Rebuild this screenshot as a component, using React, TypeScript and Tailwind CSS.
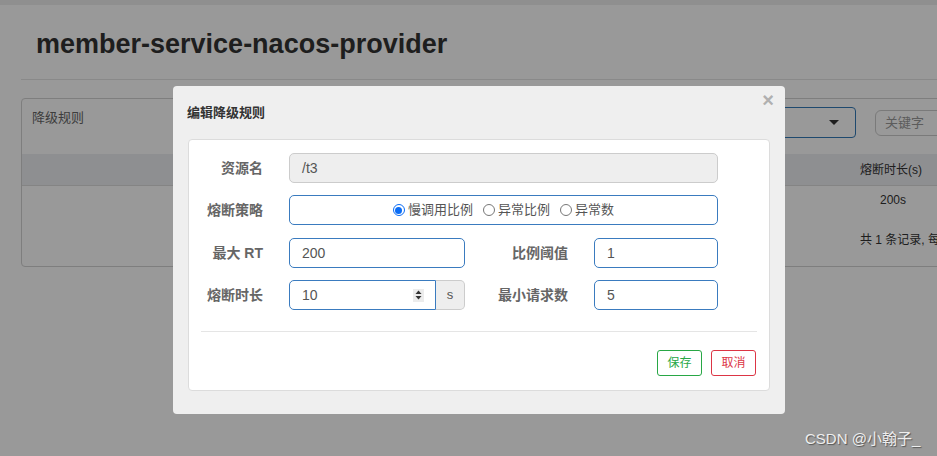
import React from "react";

const font = { fontFamily: '"Liberation Sans", "Noto Sans CJK SC", sans-serif' };

const Label = ({ text, className }: { text: string; className: string }) => (
  <div className={`shrink-0 text-right text-[14px] font-bold text-[#666] ${className}`}>{text}</div>
);

const Field = ({ value, className }: { value: string; className: string }) => (
  <div
    className={`flex h-[30px] items-center rounded-[5px] border border-[#3a7bbf] bg-white pl-[12px] text-[14px] text-[#555] ${className}`}
  >
    {value}
  </div>
);

const Radio = ({ label, checked }: { label: string; checked?: boolean }) => (
  <label className="flex items-center gap-[3px]">
    <span
      className={`flex h-[12px] w-[12px] items-center justify-center rounded-full border ${
        checked ? "border-[#0a6cf5]" : "border-[#777]"
      } bg-white`}
    >
      {checked && <span className="h-[7px] w-[7px] rounded-full bg-[#0a6cf5]" />}
    </span>
    <span>{label}</span>
  </label>
);

export default function App() {
  return (
    <div className="relative h-[456px] w-full overflow-hidden bg-white" style={font}>
      {/* page behind the dialog */}
      <div className="h-[5px] bg-[#eee]" />
      <div className="pl-[21px]">
        <div className="flex h-[75px] items-center border-b border-[#e4e4e4] pl-[15px] pt-[5px]">
          <h1 className="text-[27px] font-bold text-[#333]">member-service-nacos-provider</h1>
        </div>
        <div className="mt-[18px] w-[1000px] rounded-[4px] border border-[#d2d2d2]">
          <div className="flex h-[55px] items-start">
            <div className="pl-[10px] pt-[9px] text-[13px] text-[#666]">降级规则</div>
            <div className="ml-auto mr-[25px] mt-[8px] flex items-center gap-[19px]">
              <div className="flex h-[31px] w-[300px] items-center justify-end rounded-[4px] border border-[#337ab7] pr-[16px]">
                <span className="h-0 w-0 border-x-[5px] border-t-[5px] border-x-transparent border-t-[#333]" />
              </div>
              <div className="flex h-[26px] w-[120px] items-center rounded-[6px] border border-[#ccc] pl-[9px] text-[13px] text-[#999]">
                关键字
              </div>
            </div>
          </div>
          <div className="flex h-[32px] items-center border-b border-[#ddd] bg-[#edeef2] pl-[838px] text-[12px] text-[#333]">
            熔断时长(s)
          </div>
          <div className="flex h-[28px] items-center pl-[858px] text-[12px] text-[#333]">200s</div>
          <div className="flex h-[52px] items-center pl-[838px] text-[12px] text-[#333]">共 1 条记录, 每页</div>
        </div>
      </div>

      {/* backdrop */}
      <div className="absolute inset-0 bg-black/40" />

      {/* dialog */}
      <div className="absolute left-[173px] top-[86px] w-[612px] rounded-[4px] bg-[#efefef] pb-[23px]">
        <div className="relative flex h-[53px] items-center pl-[14px] text-[13px] font-bold text-[#333]">
          编辑降级规则
          <span className="absolute right-[11px] top-[2px] text-[20px] font-bold leading-[24px] text-[#b0b0b0]">×</span>
        </div>
        <div className="mx-[15px] rounded-[4px] border border-[#dcdcdc] bg-white pb-[14px] pt-[13px]">
          <div className="flex items-center">
            <Label text="资源名" className="w-[74px]" />
            <div className="ml-[26px] flex h-[30px] w-[429px] items-center rounded-[5px] border border-[#ccc] bg-[#eee] pl-[12px] text-[14px] text-[#555]">
              /t3
            </div>
          </div>
          <div className="mt-[12px] flex items-center">
            <Label text="熔断策略" className="w-[74px]" />
            <div className="ml-[26px] flex h-[30px] w-[429px] items-center justify-center gap-[10px] rounded-[5px] border border-[#3a7bbf] text-[13px] text-[#555]">
              <Radio label="慢调用比例" checked />
              <Radio label="异常比例" />
              <Radio label="异常数" />
            </div>
          </div>
          <div className="mt-[13px] flex items-center">
            <Label text="最大 RT" className="w-[74px]" />
            <Field value="200" className="ml-[26px] w-[176px]" />
            <Label text="比例阈值" className="w-[103px]" />
            <Field value="1" className="ml-[26px] w-[124px]" />
          </div>
          <div className="mt-[12px] flex items-center">
            <Label text="熔断时长" className="w-[74px]" />
            <div className="ml-[26px] flex h-[30px] w-[176px]">
              <div className="flex w-[147px] items-center justify-between rounded-l-[5px] border border-[#3a7bbf] pl-[12px] pr-[11px] text-[14px] text-[#555]">
                10
                <span className="flex h-[13px] w-[11px] items-center justify-center bg-[#ececec]">
                  <svg width="7" height="10" viewBox="0 0 7 10">
                    <path d="M3.5 0.5 L6.5 4 L0.5 4 Z" fill="#333" />
                    <path d="M3.5 9.5 L6.5 6 L0.5 6 Z" fill="#333" />
                  </svg>
                </span>
              </div>
              <div className="flex flex-1 items-center justify-center rounded-r-[5px] border border-l-0 border-[#ccc] bg-[#eee] text-[13px] text-[#555]">
                s
              </div>
            </div>
            <Label text="最小请求数" className="w-[103px]" />
            <Field value="5" className="ml-[26px] w-[124px]" />
          </div>
          <div className="mx-[12px] mt-[21px] border-t border-[#e5e5e5]" />
          <div className="mr-[13px] mt-[18px] flex justify-end gap-[9px]">
            <button className="h-[26px] w-[45px] rounded-[3px] border border-[#28a745] text-[12px] text-[#28a745]">
              保存
            </button>
            <button className="h-[26px] w-[45px] rounded-[3px] border border-[#dc3545] text-[12px] text-[#dc3545]">
              取消
            </button>
          </div>
        </div>
      </div>

      {/* watermark */}
      <div
        className="absolute left-[805px] top-[428px] text-[15px] text-[#eee]"
        style={{ textShadow: "1px 1px 1px #555" }}
      >
        CSDN @小翰子_
      </div>
    </div>
  );
}
